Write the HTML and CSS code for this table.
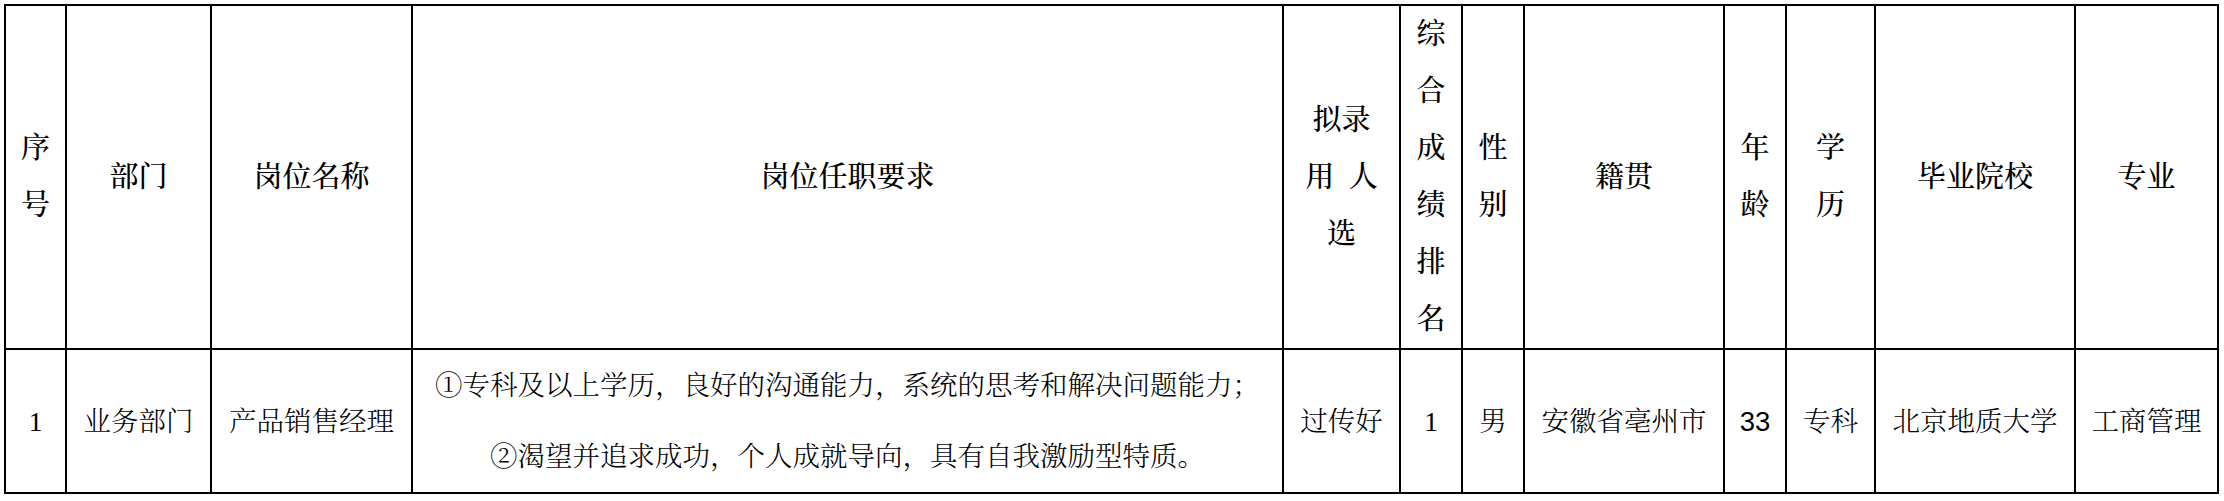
FILE: index.html
```html
<!DOCTYPE html>
<html lang="zh-CN">
<head>
<meta charset="utf-8">
<title>拟录用人选</title>
<link rel="stylesheet" href="styles.css">
</head>
<body>
<table class="sheet">
  <colgroup>
    <col class="w-no">
    <col class="w-dept">
    <col class="w-post">
    <col class="w-req">
    <col class="w-name">
    <col class="w-rank">
    <col class="w-sex">
    <col class="w-origin">
    <col class="w-age">
    <col class="w-edu">
    <col class="w-school">
    <col class="w-major">
  </colgroup>
  <thead>
    <tr class="head">
      <th>序<br>号</th>
      <th>部门</th>
      <th>岗位名称</th>
      <th>岗位任职要求</th>
      <th>拟录<br>用&ensp;人<br>选</th>
      <th>综<br>合<br>成<br>绩<br>排<br>名</th>
      <th>性<br>别</th>
      <th>籍贯</th>
      <th>年<br>龄</th>
      <th>学<br>历</th>
      <th>毕业院校</th>
      <th>专业</th>
    </tr>
  </thead>
  <tbody>
    <tr class="row">
      <td class="num">1</td>
      <td>业务部门</td>
      <td>产品销售经理</td>
      <td class="req">
        <p>①专科及以上学历，良好的沟通能力，系统的思考和解决问题能力；</p>
        <p>②渴望并追求成功，个人成就导向，具有自我激励型特质。</p>
      </td>
      <td>过传好</td>
      <td class="num">1</td>
      <td>男</td>
      <td>安徽省亳州市</td>
      <td class="num-sans">33</td>
      <td>专科</td>
      <td>北京地质大学</td>
      <td>工商管理</td>
    </tr>
  </tbody>
</table>
</body>
</html>
```
FILE: styles.css
```css
html, body {
  margin: 0;
  padding: 0;
  background: #ffffff;
}

.sheet {
  border-collapse: collapse;
  table-layout: fixed;
  width: 2215px;
  margin: 4px 0 0 4px;
  color: #000000;
  font-family: "Liberation Serif", "Noto Serif CJK SC", "Noto Sans CJK SC", serif;
}

.sheet th,
.sheet td {
  border: 2px solid #000000;
  padding: 0;
  text-align: center;
  vertical-align: middle;
}

.w-no { width: 61px; }
.w-dept { width: 145px; }
.w-post { width: 201px; }
.w-req { width: 871px; }
.w-name { width: 117px; }
.w-rank { width: 62px; }
.w-sex { width: 62px; }
.w-origin { width: 200px; }
.w-age { width: 62px; }
.w-edu { width: 89px; }
.w-school { width: 200px; }
.w-major { width: 143px; }

.head {
  height: 344px;
}

.head th {
  font-size: 29px;
  line-height: 57px;
  font-weight: 500;
}

.row {
  height: 142px;
}

.row td {
  font-size: 27.5px;
  line-height: 71px;
  font-weight: 300;
}

.req p {
  margin: 0;
}

.num {
  font-family: "Liberation Serif", serif;
}

.num-sans {
  font-family: "Liberation Sans", sans-serif;
}
```
